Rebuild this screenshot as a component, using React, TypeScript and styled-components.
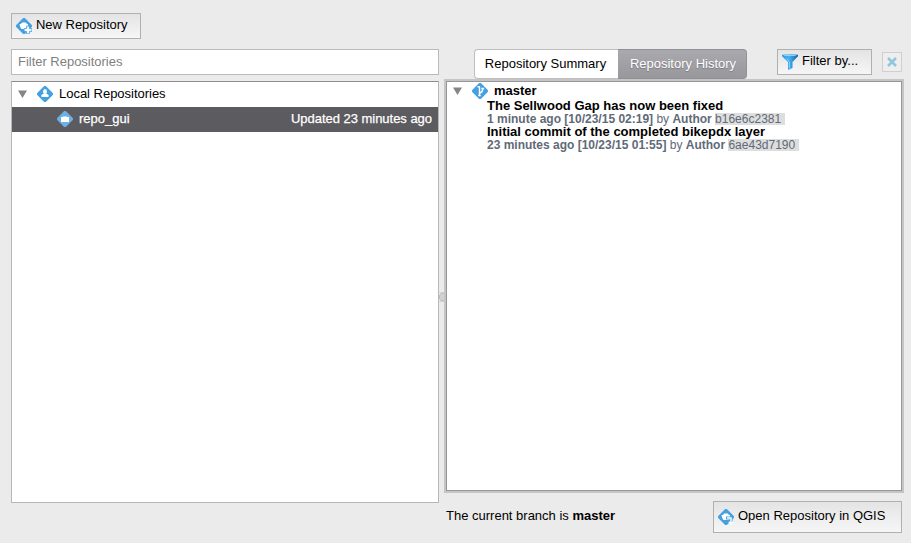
import React from "react";
import styled, { createGlobalStyle, css } from "styled-components";

const GlobalStyle = createGlobalStyle`
  * { box-sizing: border-box; }
  body { margin: 0; background: #ebebeb; overflow: hidden; }
  button, input { font: inherit; color: inherit; letter-spacing: inherit; margin: 0; }
`;

const Window = styled.div`
  width: 911px;
  height: 543px;
  padding: 13px 9px 10px 11px;
  display: flex;
  flex-direction: column;
  background: #ebebeb;
  color: #000;
  font: 13px/15px "Liberation Sans", Arial, sans-serif;
  white-space: nowrap;
`;

const Label = styled.span<{ $track?: number }>`
  letter-spacing: ${(p) => p.$track ?? 0}px;
`;

const Toolbar = styled.header`
  height: 36px;
  display: flex;
  align-items: flex-start;
`;

const PushButton = styled.button<{ $w: number; $h: number }>`
  width: ${(p) => p.$w}px;
  height: ${(p) => p.$h}px;
  padding: 0 0 3px 4px;
  display: flex;
  align-items: center;
  gap: 4px;
  border: 1px solid #b0b0b0;
  background: linear-gradient(#e4e4e4, #f6f6f6);
  svg { flex: none; margin-top: 3px; }
`;

const Workspace = styled.main`
  flex: 1;
  display: flex;
`;

const Sidebar = styled.section`
  width: 428px;
  display: flex;
  flex-direction: column;
  gap: 6px;
`;

const FilterInput = styled.input`
  height: 26px;
  padding: 0 5px 1px 6px;
  border: 1px solid #bababa;
  border-radius: 0;
  background: #fff;
  outline: none;
  letter-spacing: -0.02px;
  &::placeholder { color: #7f7f7f; opacity: 1; }
`;

const RepositoryTree = styled.div`
  height: 422px;
  border: 1px solid #b7b7b7;
  border-top-color: #8e8e8e;
  background: #fff;
`;

const TreeRow = styled.div<{ $selected?: boolean }>`
  height: 25px;
  padding: 0 6px 2px;
  display: flex;
  align-items: center;
  svg { margin-top: 1px; }
  ${(p) =>
    p.$selected &&
    css`
      padding-left: 45px;
      color: #fff;
      background: #5c5b60;
      -webkit-text-stroke: 0.25px #fff;
    `}
`;

const RowName = styled.span<{ $gap: number }>`
  flex: 1;
  margin-left: ${(p) => p.$gap}px;
  display: flex;
  align-items: center;
  gap: 6px;
`;

const Splitter = styled.div`
  width: 7px;
  padding-top: 30px;
  display: flex;
  flex-direction: column;
`;

const Grip = styled.div`
  width: 5px;
  height: 10px;
  margin-top: 213px;
  border: solid #d2d2d2;
  border-width: 1px 0;
  background: #f4f4f4;
  display: grid;
  place-items: center;
  &::after {
    content: "";
    width: 5px;
    height: 6px;
    border-radius: 3px;
    border: 1px solid #bcbcbc;
    background: #d2d2d2;
  }
`;

const Detail = styled.section`
  width: 456px;
  display: flex;
  flex-direction: column;
`;

const DetailHeader = styled.div`
  height: 32px;
  padding-left: 28px;
  display: flex;
  align-items: flex-start;
`;

const Tabs = styled.div`
  width: 273px;
  height: 30px;
  display: flex;
  margin-right: 30px;
`;

const Tab = styled.button<{ $active?: boolean }>`
  width: 144px;
  padding: 0 2px 1px 0;
  border: 1px solid #bdbdbd;
  border-right: 0;
  border-radius: 4px 0 0 4px;
  background: #fff;
  ${(p) =>
    p.$active &&
    css`
      width: 129px;
      padding: 0 0 1px 2px;
      color: #fff;
      border: 1px solid #929296;
      border-left: 0;
      border-radius: 0 4px 4px 0;
      background: linear-gradient(#aaa9ae, #98979c);
      text-shadow: 0 1px 1px #77767b;
    `}
`;

const ClearButton = styled.button`
  width: 20px;
  height: 20px;
  margin: 3px 0 0 10px;
  padding: 0;
  display: grid;
  place-items: center;
  border: 1px solid #cfcfcf;
  background: #eee;
`;

const HistoryPanel = styled.div`
  height: 410px;
  padding: 0 6px;
  border: 1px solid #979797;
  background: #fff;
  box-shadow: 0 0 0 2px #c5c5c5;
`;

const BranchRow = styled.div`
  height: 17px;
  display: flex;
  align-items: center;
  font-weight: bold;
  gap: 6px;
  svg { margin-top: 1px; }
  svg + svg { margin-left: 4px; }
`;

const Commit = styled.article`
  height: 26px;
  padding-left: 34px;
  line-height: 13px;
`;

const CommitTitle = styled.div`
  font-weight: bold;
`;

const CommitMeta = styled.div`
  height: 13px;
  padding-top: 1px;
  line-height: 12px;
  font-size: 12px;
  color: #5f6a77;
`;

const Hash = styled.span`
  display: inline-block;
  height: 12px;
  padding-right: 4px;
  background: #dedede;
`;

const Footer = styled.footer`
  height: 42px;
  padding-top: 10px;
  display: flex;
  justify-content: space-between;
`;

const BranchStatus = styled.span`
  padding-top: 7px;
`;

type Glyph = "add" | "user" | "repo" | "branch" | "open";

const Diamond = ({ glyph }: { glyph: Glyph }) => (
  <svg width="16" height="16" viewBox="0.5 0.5 16 16">
    <path
      d="M6.9 1.2 1.2 6.9q-1.6 1.6 0 3.2l5.7 5.7q1.6 1.6 3.2 0l5.7-5.7q1.6-1.6 0-3.2l-5.7-5.7Q8.5-.4 6.9 1.2Z"
      fill={glyph === "repo" ? "#6eb0e2" : "#45a0e1"}
    />
    {glyph === "repo" && (
      <g fill="#fff">
        <path d="M4.5 6.5h8v5h-8Z" />
        <path d="M6.5 5.5h4v1h-4Z" opacity=".5" />
      </g>
    )}
    {glyph === "user" && (
      <g fill="#fff">
        <ellipse cx="8.5" cy="6" rx="2" ry="2.5" />
        <path d="M5 11.5V9.8q0-1 2-1.6h3q2 .6 2 1.6v1.7Z" />
      </g>
    )}
    {glyph === "branch" && (
      <g fill="none" stroke="#fff" strokeWidth="1.4">
        <path d="M8 13.5V4.5M8 10.8q3.2-1 3.2-4.3" />
        <path d="M6 4.2h2.6M9.8 6h2.8M6.8 13h2.4" strokeWidth="1.6" />
      </g>
    )}
    {(glyph === "add" || glyph === "open") && (
      <path d="M4 6.5h1.5L6.5 5h4l.8 1.5h1.2v5H6Q4.5 10 4 6.5Z" fill="#fff" />
    )}
    {glyph === "add" && (
      <path
        d="M11.1 8.6h2.8v2.5h2.5v2.8h-2.5v2.5h-2.8v-2.5H8.6v-2.8h2.5Z"
        fill="#fff"
        stroke="#45a0e1"
        strokeWidth=".9"
      />
    )}
    {glyph === "open" && (
      <g fill="none">
        <path d="M8.5 9.5h5V15" stroke="#45a0e1" strokeWidth="3" />
        <path d="M9.5 9.5h4v5.5M11.3 13.3l2.2 2.2 2.2-2.2" stroke="#fff" strokeWidth="1.4" />
      </g>
    )}
  </svg>
);

const Disclosure = () => (
  <svg width="9" height="8" viewBox="0 0 9 8">
    <path d="M0 .5h9L4.5 8Z" fill="#858585" />
  </svg>
);

const Funnel = () => (
  <svg width="16" height="16" viewBox="0 0 16 16">
    <defs>
      <linearGradient id="funnel">
        <stop offset="0" stopColor="#2d9ce8" />
        <stop offset=".45" stopColor="#49b0f0" />
        <stop offset="1" stopColor="#0f62b0" />
      </linearGradient>
    </defs>
    <path d="M0 .8Q8-.4 16 .8v1.4L10.5 8v6L6 16V8L0 2.2Z" fill="url(#funnel)" />
    <ellipse cx="8" cy="1.4" rx="6.5" ry=".7" fill="#8fd3f7" />
    <path d="M4.5 4.5 7.5 8v6" fill="none" stroke="#8bd4fa" strokeWidth=".9" />
  </svg>
);

export default function App() {
  return (
    <>
      <GlobalStyle />
      <Window>
        <Toolbar>
          <PushButton $w={130} $h={26}>
            <Diamond glyph="add" />
            <Label $track={-0.02}>New Repository</Label>
          </PushButton>
        </Toolbar>
        <Workspace>
          <Sidebar>
            <FilterInput placeholder="Filter Repositories" />
            <RepositoryTree>
              <TreeRow>
                <Disclosure />
                <RowName $gap={10}>
                  <Diamond glyph="user" />
                  <Label $track={-0.02}>Local Repositories</Label>
                </RowName>
              </TreeRow>
              <TreeRow $selected>
                <RowName $gap={0}>
                  <Diamond glyph="repo" />
                  <Label>repo_gui</Label>
                </RowName>
                <Label $track={-0.03}>Updated 23 minutes ago</Label>
              </TreeRow>
            </RepositoryTree>
          </Sidebar>
          <Splitter>
            <Grip />
          </Splitter>
          <Detail>
            <DetailHeader>
              <Tabs>
                <Tab>Repository Summary</Tab>
                <Tab $active>Repository History</Tab>
              </Tabs>
              <PushButton $w={95} $h={26}>
                <Funnel />
                <Label>Filter by...</Label>
              </PushButton>
              <ClearButton aria-label="Clear filter">
                <svg width="10" height="10" viewBox="0 0 10 10">
                  <path d="m1 1 8 8M9 1 1 9" stroke="#93c5df" strokeWidth="2.5" />
                </svg>
              </ClearButton>
            </DetailHeader>
            <HistoryPanel>
              <BranchRow>
                <Disclosure />
                <Diamond glyph="branch" />
                <Label>master</Label>
              </BranchRow>
              <Commit>
                <CommitTitle>The Sellwood Gap has now been fixed</CommitTitle>
                <CommitMeta>
                  <b>1 minute ago [10/23/15 02:19]</b> by <b>Author</b> <Hash>b16e6c2381</Hash>
                </CommitMeta>
              </Commit>
              <Commit>
                <CommitTitle>Initial commit of the completed bikepdx layer</CommitTitle>
                <CommitMeta>
                  <b>23 minutes ago [10/23/15 01:55]</b> by <b>Author</b> <Hash>6ae43d7190</Hash>
                </CommitMeta>
              </Commit>
            </HistoryPanel>
            <Footer>
              <BranchStatus>
                The current branch is <b>master</b>
              </BranchStatus>
              <PushButton $w={189} $h={32}>
                <Diamond glyph="open" />
                <Label>Open Repository in QGIS</Label>
              </PushButton>
            </Footer>
          </Detail>
        </Workspace>
      </Window>
    </>
  );
}
